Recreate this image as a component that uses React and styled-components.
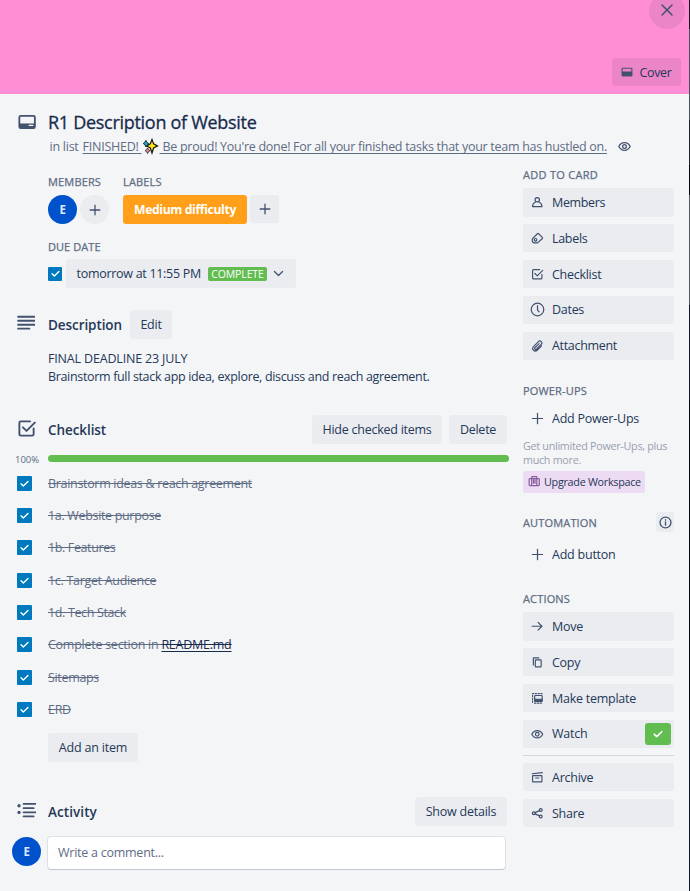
import React from 'react';
import styled, { createGlobalStyle } from 'styled-components';

const GlobalStyle = createGlobalStyle`
  * { box-sizing: border-box; }
  body {
    margin: 0;
    background: #f4f5f7;
    color: #253858;
    font-family: "Open Sans", "Noto Sans", sans-serif;
    font-size: 12.5px;
    letter-spacing: -0.28px;
  }
`;

const Page = styled.div`
  display: flex;
  width: 690px;
  height: 891px;
  overflow: hidden;
`;

const Card = styled.div`
  flex: 1;
  background: #f4f5f7;
`;

const Backdrop = styled.div`
  width: 1px;
  background: linear-gradient(
    #10141c 0 29px, #4a5360 29px 120px, #23282f 120px 165px, #05070c 165px 195px,
    #555a63 195px 305px, #12192c 305px 400px, #060a14 400px 720px, #10182b 720px
  );
`;

const Cover = styled.header`
  display: flex;
  flex-direction: column;
  align-items: flex-end;
  justify-content: space-between;
  height: 94px;
  padding: 0 8px 8px 0;
  background: #ff8ed4;
`;

const CloseButton = styled.button`
  display: flex;
  align-items: center;
  justify-content: center;
  width: 36px;
  height: 36px;
  margin: -7px -4px 0 0;
  padding: 0 0 2px;
  border: 0;
  border-radius: 50%;
  background: rgba(9, 30, 66, 0.08);
  color: #42526e;
`;

const Button = styled.button`
  display: flex;
  align-items: center;
  justify-content: center;
  flex: none;
  width: ${(p) => p.$w}px;
  height: ${(p) => p.$h || 29}px;
  padding: 0;
  border: 0;
  border-radius: ${(p) => (p.$round ? '50%' : '3px')};
  background: ${(p) => (p.$dark ? 'rgba(9, 30, 66, 0.08)' : 'rgba(9, 30, 66, 0.04)')};
  color: #253858;
  font: inherit;
  letter-spacing: ${(p) => p.$track ?? -0.25}px;
  white-space: nowrap;
  gap: ${(p) => p.$gap || 0}px;
`;

const Svg = styled.svg`
  display: block;
  flex: none;
  width: ${(p) => p.$size}px;
  height: ${(p) => p.$size}px;
  fill: none;
  stroke: currentColor;
  stroke-width: ${(p) => p.$stroke || 1.3};
  color: ${(p) => p.$color || '#42526e'};
`;

const Body = styled.div`
  display: flex;
  flex-wrap: wrap;
`;

const TitleBlock = styled.div`
  display: grid;
  grid-template-columns: 48px 1fr;
  width: 100%;
  height: 74px;
  padding-top: 14px;
`;

const TitleIcon = styled.div`
  padding: 5px 0 0 17.5px;
`;

const Title = styled.h1`
  margin: 0;
  font-size: 18px;
  font-weight: 500;
  line-height: 28px;
  letter-spacing: -0.29px;
  color: #172b4d;
  -webkit-text-stroke: 0.3px currentColor;
`;

const ListLine = styled.div`
  display: flex;
  align-items: center;
  height: 20px;
  padding-left: 1.5px;
  color: #5e6c84;
  letter-spacing: -0.25px;
  white-space: pre;
`;

const ListLink = styled.a`
  display: flex;
  align-items: center;
  margin: 0 11px 0 4px;

  span {
    text-decoration: underline;
    text-underline-offset: 2px;
    text-decoration-skip-ink: none;
  }
`;

const LinkTail = styled.span`
  letter-spacing: -0.285px;
`;

const Main = styled.main`
  width: 523px;
`;

const Fields = styled.div`
  display: flex;
  gap: 14px;
  height: 65px;
  padding: 7px 0 0 48px;
`;

const FieldLabel = styled.h3`
  margin: 0;
  height: 20px;
  color: #5e6c84;
  font-size: 11px;
  font-weight: 500;
  line-height: 14px;
  letter-spacing: ${(p) => p.$track ?? 0.16}px;
  white-space: nowrap;
  -webkit-text-stroke: 0.25px currentColor;
`;

const FieldRow = styled.div`
  display: flex;
  gap: 3px;
`;

const Avatar = styled.div`
  display: flex;
  align-items: center;
  justify-content: center;
  flex: none;
  width: 29px;
  height: 29px;
  border-radius: 50%;
  background: #0052cc;
  color: #deebff;
  font-size: 11.5px;
  font-weight: 700;
`;

const Label = styled.div`
  width: 124px;
  height: 29px;
  border-radius: 3px;
  background: #ff9f1a;
  color: #fff;
  font-weight: 700;
  font-size: 12.2px;
  line-height: 29px;
  letter-spacing: -0.36px;
  text-align: center;
`;

const DueDate = styled.div`
  height: 77px;
  padding: 7px 0 0 48px;
`;

const DueRow = styled.div`
  display: flex;
  align-items: center;
  gap: 4px;
  margin-top: -1px;
`;

const DueButton = styled.button`
  display: flex;
  align-items: center;
  width: 230px;
  height: 29px;
  padding: 0 0 0 10.5px;
  border: 0;
  border-radius: 3px;
  background: rgba(9, 30, 66, 0.04);
  color: #253858;
  font: inherit;
  letter-spacing: -0.29px;
  white-space: nowrap;
`;

const Complete = styled.span`
  width: 59px;
  height: 14px;
  margin: 0 5px 0 7px;
  border-radius: 2px;
  background: #61bd4f;
  color: #fff;
  font-size: 10.5px;
  line-height: 14px;
  letter-spacing: -0.12px;
  text-align: center;
`;

const Box = styled.span`
  display: flex;
  align-items: center;
  justify-content: center;
  flex: none;
  width: ${(p) => p.$size}px;
  height: ${(p) => p.$size}px;
  border-radius: 1px;
  background: #0079bf;
`;

const SectionHead = styled.div`
  display: flex;
  align-items: center;
  height: 29px;
  padding-right: 16px;
  gap: 7px;
`;

const SectionIcon = styled.div`
  width: 41px;
  padding: 0 0 3px 17px;
`;

const SectionTitle = styled.h2`
  flex: ${(p) => (p.$grow ? 1 : 'none')};
  margin: 0;
  padding-top: 1px;
  width: 75px;
  font-size: 13.5px;
  font-weight: 600;
  line-height: 20px;
  letter-spacing: ${(p) => p.$track ?? -0.08}px;
`;

const Description = styled.div`
  height: 76px;
  padding: 11px 0 0 48px;
  line-height: 18px;
`;

const DescLine = styled.p`
  margin: 0;
  letter-spacing: ${(p) => p.$track}px;
  white-space: nowrap;
`;

const Progress = styled.div`
  display: flex;
  align-items: center;
  height: 23px;
  padding: 5px 0 0;
`;

const Percent = styled.span`
  width: 48px;
  padding: 2px 0 0 15px;
  color: #5e6c84;
  font-size: 9.5px;
  letter-spacing: 0;
`;

const Bar = styled.div`
  width: 461px;
  height: 7px;
  border-radius: 4px;
  background: #61bd4f;
`;

const Item = styled.div`
  display: flex;
  align-items: center;
  height: 32.36px;
  padding-left: 17px;
  gap: 16px;
`;

const ItemText = styled.span`
  color: #5e6c84;
  letter-spacing: ${(p) => p.$track}px;
  text-decoration: line-through;
  white-space: nowrap;
`;

const DocLink = styled.a`
  color: #172b4d;
  letter-spacing: -0.25px;
  text-decoration: underline line-through;
  text-underline-offset: 2px;
`;

const AddItem = styled.div`
  height: 71.500px;
  padding: 7px 0 0 48px;
`;

const CommentRow = styled.div`
  display: flex;
  gap: 7px;
  padding: 11px 0 0 12px;
`;

const CommentBox = styled.div`
  width: 457px;
  height: 32px;
  padding-left: 10px;
  border-radius: 3px;
  background: #fff;
  box-shadow: 0 1px 1px rgba(9, 30, 66, 0.15), 0 0 0 1px rgba(9, 30, 66, 0.08);
  color: #5e6c84;
  line-height: 32px;
  letter-spacing: -0.25px;
`;

const Sidebar = styled.aside`
  width: 151px;
`;

const SideSection = styled.section`
  height: ${(p) => p.$h}px;
`;

const SideList = styled.div`
  display: flex;
  flex-direction: column;
  gap: 7.4px;
`;

const SideButton = styled.button`
  display: flex;
  align-items: center;
  width: 151px;
  height: 28.5px;
  padding: 0 3px 0 6px;
  border: 0;
  border-radius: 3px;
  background: ${(p) => (p.$plain ? 'transparent' : 'rgba(9, 30, 66, 0.04)')};
  color: #253858;
  font: inherit;
  letter-spacing: ${(p) => p.$track ?? -0.26}px;
  text-align: left;
  white-space: nowrap;
`;

const SideIcon = styled.div`
  display: flex;
  justify-content: center;
  width: 17px;
  margin-right: 6px;
`;

const SideLabel = styled.span`
  flex: 1;
`;

const Watching = styled.div`
  display: flex;
  align-items: center;
  justify-content: center;
  width: 26px;
  height: 22px;
  border-radius: 3px;
  background: #61bd4f;
`;

const Divider = styled.hr`
  width: 100%;
  height: 1px;
  margin: -1px 0 0;
  border: 0;
  background: #d5d8de;
`;

const Hint = styled.p`
  margin: 6px 0 4px;
  color: #97a0af;
  font-size: 10.75px;
  line-height: 14px;
`;

const Upgrade = styled.button`
  display: flex;
  align-items: center;
  gap: 4px;
  width: 122px;
  height: 22px;
  padding: 0 0 0 4.5px;
  border: 0;
  border-radius: 3px;
  background: #eddbf4;
  color: #253858;
  font: inherit;
  font-size: 10.75px;
  letter-spacing: -0.26px;
  white-space: nowrap;
`;

const SideHead = styled.div`
  display: flex;
  justify-content: space-between;
  align-items: flex-start;
  height: 28px;
`;

const icons = {
  close: <path d="M3 3l10 10M13 3L3 13" />,
  plus: <path d="M8 2.5v11M2.5 8h11" />,
  down: <path d="M3 5.5l5 5 5-5" />,
  check: <path d="M3 8.3l3.3 3.2L13 5" />,
  cover: <><rect x="1.5" y="3" width="13" height="10" rx="1" /><path d="M2 8h12v5H2z" fill="currentColor" /></>,
  card: <><rect x="1.2" y="2.6" width="13.8" height="10.8" rx="1.2" /><path d="M1.2 9.3h13.8v4H1.2z" fill="currentColor" stroke="none" /><path d="M10 11h3" stroke="#f4f5f7" strokeWidth="1.3" /></>,
  text: <path d="M1 2.5h15M1 6h15M1 9.5h15M1 13h10" />,
  list: <><path d="M5.5 2.5H16M5.5 6H14M5.5 9.5H16M5.5 13H14" /><circle cx="1.7" cy="4" r="1.4" fill="currentColor" stroke="none" /><circle cx="1.7" cy="9.6" r="1.4" fill="currentColor" stroke="none" /></>,
  checklist: <><path d="M11 2H3.2Q2 2 2 3.2v9.6Q2 14 3.2 14h9.6q1.2 0 1.2-1.2V8" /><path d="M5 7l3 3 7-7" /></>,
  eye: <><path d="M1 8Q3.5 3.3 8 3.3T15 8q-2.5 4.7-7 4.7T1 8z" /><circle cx="8" cy="8" r="2.3" /></>,
  member: <><circle cx="8" cy="4.8" r="2.8" /><path d="M5.8 7.7Q2 9.5 2 13.5h12q0-4-3.8-5.8" /></>,
  label: <><path d="M2 8.5L8.2 2.2Q9 1.5 9.8 2.2l4.7 4.6q.7.8 0 1.5L8.5 14H4.5Q1.5 13.5 1.5 10.5z" /><circle cx="5.8" cy="10" r="1.7" /></>,
  clock: <><circle cx="8" cy="8" r="6.7" /><path d="M8 3.8V8.3l1.7 2.2" /></>,
  clip: <path d="M13.5 7.5l-5.6 5.6a3.3 3.3 0 0 1-4.7-4.7L9.5 2.1a2.5 2.5 0 0 1 3.6 3.6L7 11.8a1.3 1.3 0 0 1-1.9-1.9l5.3-5.3" />,
  arrow: <path d="M1.5 8h12.5M9 3l5 5-5 5" />,
  copy: <><path d="M3 11.5V2.5h7" /><rect x="5.5" y="5" width="7.5" height="9" rx=".8" /></>,
  template: <><path d="M2 13V2h12.5" strokeDasharray="1.6 2" /><rect x="4.7" y="4.500" width="9.600" height="7.500" rx="1" /><path d="M5 9.3h9V12H5z" fill="currentColor" /><path d="M4.500 14.300h9.500" strokeDasharray="1.6 2" /></>,
  archive: <><path d="M1.5 3.5L14.5 2" /><rect x="2" y="6" width="12" height="8" rx=".5" /><path d="M6 9h4" /></>,
  share: <><circle cx="3.5" cy="8" r="1.8" /><circle cx="12.5" cy="3.8" r="1.8" /><circle cx="12.5" cy="12.2" r="1.8" /><path d="M5.2 7.2l5.6-2.6M5.2 8.8l5.6 2.6" /></>,
  info: <><circle cx="8" cy="8" r="6.7" /><path d="M8 7.300v4M8 4.500v.6" /></>,
  bag: <><path d="M5 4.5V2.2h6v2.3" /><rect x="1.5" y="4.5" width="13" height="9" rx="1" /><path d="M4.7 5v8M11.3 5v8M7 6v4.5M9 6v4.5" /></>,
};

function Icon({ name, size = 14, color, stroke }) {
  return (
    <Svg viewBox="0 0 16 16" $size={size} $color={color} $stroke={stroke} strokeLinecap="round" strokeLinejoin="round">
      {icons[name]}
    </Svg>
  );
}

const SparkleSvg = styled.svg`
  display: block;
  width: 15px;
  height: 15px;
  margin: 0 2px 0 1px;
  overflow: visible;
`;

const Sparkles = () => (
  <SparkleSvg viewBox="0 0 15 15">
    <path d="M9 .5l1.6 4.4L14.5 7l-3.9 2L9 14 7.3 9 3.500 7l3.8-2.1z" fill="#ffe81a" stroke="#17150b" strokeWidth="1.2" />
    <path d="M2.8 1.3L4.2 3.5 6 4.8 4.2 6 2.9 8 2 5.8.2 4.5 2 3.3z" fill="#1fa7bd" stroke="#14262b" strokeWidth=".9" />
    <path d="M4.5 9l1 1.7 1.5 1-1.5 1L4.6 14.5l-1-1.8-1.5-1 1.5-1z" fill="#e986a8" stroke="#30151f" strokeWidth=".8" />
  </SparkleSvg>
);

const items = [
  ['Brainstorm ideas & reach agreement', -0.315],
  ['1a. Website purpose', -0.33],
  ['1b. Features', -0.38],
  ['1c. Target Audience', -0.31],
  ['1d. Tech Stack', -0.36],
  ['Complete section in ', -0.26, 'README.md'],
  ['Sitemaps', -0.33],
  ['ERD', -0.3],
];

const addActions = [
  ['member', 'Members', -0.36],
  ['label', 'Labels', -0.3],
  ['checklist', 'Checklist', -0.28],
  ['clock', 'Dates', -0.28],
  ['clip', 'Attachment', -0.32],
];

const cardActions = [
  ['arrow', 'Move'],
  ['copy', 'Copy'],
  ['template', 'Make template'],
  ['eye', 'Watch'],
];

const lastActions = [
  ['archive', 'Archive'],
  ['share', 'Share'],
];

function SideAction({ icon, label, track, plain, children }) {
  const large = icon === 'plus' || icon === 'clock';
  return (
    <SideButton $track={track} $plain={plain}>
      <SideIcon><Icon name={icon} size={large ? 15 : 12.5} stroke={large ? 1.3 : 1.5} /></SideIcon>
      <SideLabel>{label}</SideLabel>
      {children}
    </SideButton>
  );
}

export default function App() {
  return (
    <Page>
      <GlobalStyle />
      <Card>
        <Cover>
          <CloseButton aria-label="Close"><Icon name="close" size={16} stroke={1.5} /></CloseButton>
          <Button $w={69} $h={28} $dark $gap={6} $track={-0.32}>
            <Icon name="cover" size={12} stroke={1.5} />
            Cover
          </Button>
        </Cover>
        <Body>
          <TitleBlock>
            <TitleIcon><Icon name="card" size={18} stroke={1.6} /></TitleIcon>
            <div>
              <Title>R1 Description of Website</Title>
              <ListLine>
                in list
                <ListLink>
                  <span>FINISHED! </span>
                  <Sparkles />
                  <LinkTail> Be proud! You're done! For all your finished tasks that your team has hustled on.</LinkTail>
                </ListLink>
                <Icon name="eye" size={13} stroke={1.6} />
              </ListLine>
            </div>
          </TitleBlock>

          <Main>
            <Fields>
              <div>
                <FieldLabel>MEMBERS</FieldLabel>
                <FieldRow>
                  <Avatar>E</Avatar>
                  <Button $w={29} $h={29} $round aria-label="Add member"><Icon name="plus" stroke={1.5} /></Button>
                </FieldRow>
              </div>
              <div>
                <FieldLabel>LABELS</FieldLabel>
                <FieldRow>
                  <Label>Medium difficulty</Label>
                  <Button $w={29} $h={28} aria-label="Add label"><Icon name="plus" stroke={1.5} /></Button>
                </FieldRow>
              </div>
            </Fields>
            <DueDate>
              <FieldLabel $track={0.06}>DUE DATE</FieldLabel>
              <DueRow>
                <Box $size={14}><Icon name="check" size={11} color="#fff" stroke={2} /></Box>
                <DueButton>
                  tomorrow at 11:55 PM
                  <Complete>COMPLETE</Complete>
                  <Icon name="down" size={13} stroke={1.6} />
                </DueButton>
              </DueRow>
            </DueDate>

            <SectionHead>
              <SectionIcon><Icon name="text" size={18} stroke={1.7} /></SectionIcon>
              <SectionTitle>Description</SectionTitle>
              <Button $w={42}>Edit</Button>
            </SectionHead>
            <Description>
              <DescLine $track={-0.17}>FINAL DEADLINE 23 JULY</DescLine>
              <DescLine $track={-0.335}>Brainstorm full stack app idea, explore, discuss and reach agreement.</DescLine>
            </Description>

            <SectionHead>
              <SectionIcon><Icon name="checklist" size={19} stroke={1.6} /></SectionIcon>
              <SectionTitle $grow>Checklist</SectionTitle>
              <Button $w={130}>Hide checked items</Button>
              <Button $w={58}>Delete</Button>
            </SectionHead>
            <Progress>
              <Percent>100%</Percent>
              <Bar />
            </Progress>
            {items.map(([text, track, link]) => (
              <Item key={text}>
                <Box $size={15}><Icon name="check" size={11} color="#fff" stroke={2} /></Box>
                <ItemText $track={track}>{text}{link && <DocLink>{link}</DocLink>}</ItemText>
              </Item>
            ))}
            <AddItem><Button $w={90} $track={-0.18}>Add an item</Button></AddItem>

            <SectionHead>
              <SectionIcon><Icon name="list" size={19} stroke={1.5} /></SectionIcon>
              <SectionTitle $grow $track={0.08}>Activity</SectionTitle>
              <Button $w={92} $track={-0.23}>Show details</Button>
            </SectionHead>
            <CommentRow>
              <Avatar>E</Avatar>
              <CommentBox>Write a comment...</CommentBox>
            </CommentRow>
          </Main>

          <Sidebar>
            <SideSection $h={216}>
              <FieldLabel $track={0.28}>ADD TO CARD</FieldLabel>
              <SideList>
                {addActions.map(([icon, label, track]) => (
                  <SideAction key={label} icon={icon} label={label} track={track} />
                ))}
              </SideList>
            </SideSection>
            <SideSection $h={128}>
              <FieldLabel>POWER-UPS</FieldLabel>
              <SideAction icon="plus" label="Add Power-Ups" track={-0.23} plain />
              <Hint>Get unlimited Power-Ups, plus much more.</Hint>
              <Upgrade><Icon name="bag" size={12.5} color="#89609e" stroke={1.6} />Upgrade Workspace</Upgrade>
            </SideSection>
            <SideSection $h={80}>
              <SideHead>
                <div>
                  <Spacer />
                  <FieldLabel>AUTOMATION</FieldLabel>
                </div>
                <Button $w={18} $h={20} aria-label="Info"><Icon name="info" size={13} stroke={1.6} /></Button>
              </SideHead>
              <SideAction icon="plus" label="Add button" track={-0.23} plain />
            </SideSection>
            <SideSection $h={240}>
              <FieldLabel>ACTIONS</FieldLabel>
              <SideList>
                {cardActions.map(([icon, label]) => (
                  <SideAction key={label} icon={icon} label={label}>
                    {label === 'Watch' && (
                      <Watching><Icon name="check" size={12} color="#fff" stroke={2.2} /></Watching>
                    )}
                  </SideAction>
                ))}
                <Divider />
                {lastActions.map(([icon, label]) => (
                  <SideAction key={label} icon={icon} label={label} />
                ))}
              </SideList>
            </SideSection>
          </Sidebar>
        </Body>
      </Card>
      <Backdrop />
    </Page>
  );
}

const Spacer = styled.div`
  height: 4px;
`;
